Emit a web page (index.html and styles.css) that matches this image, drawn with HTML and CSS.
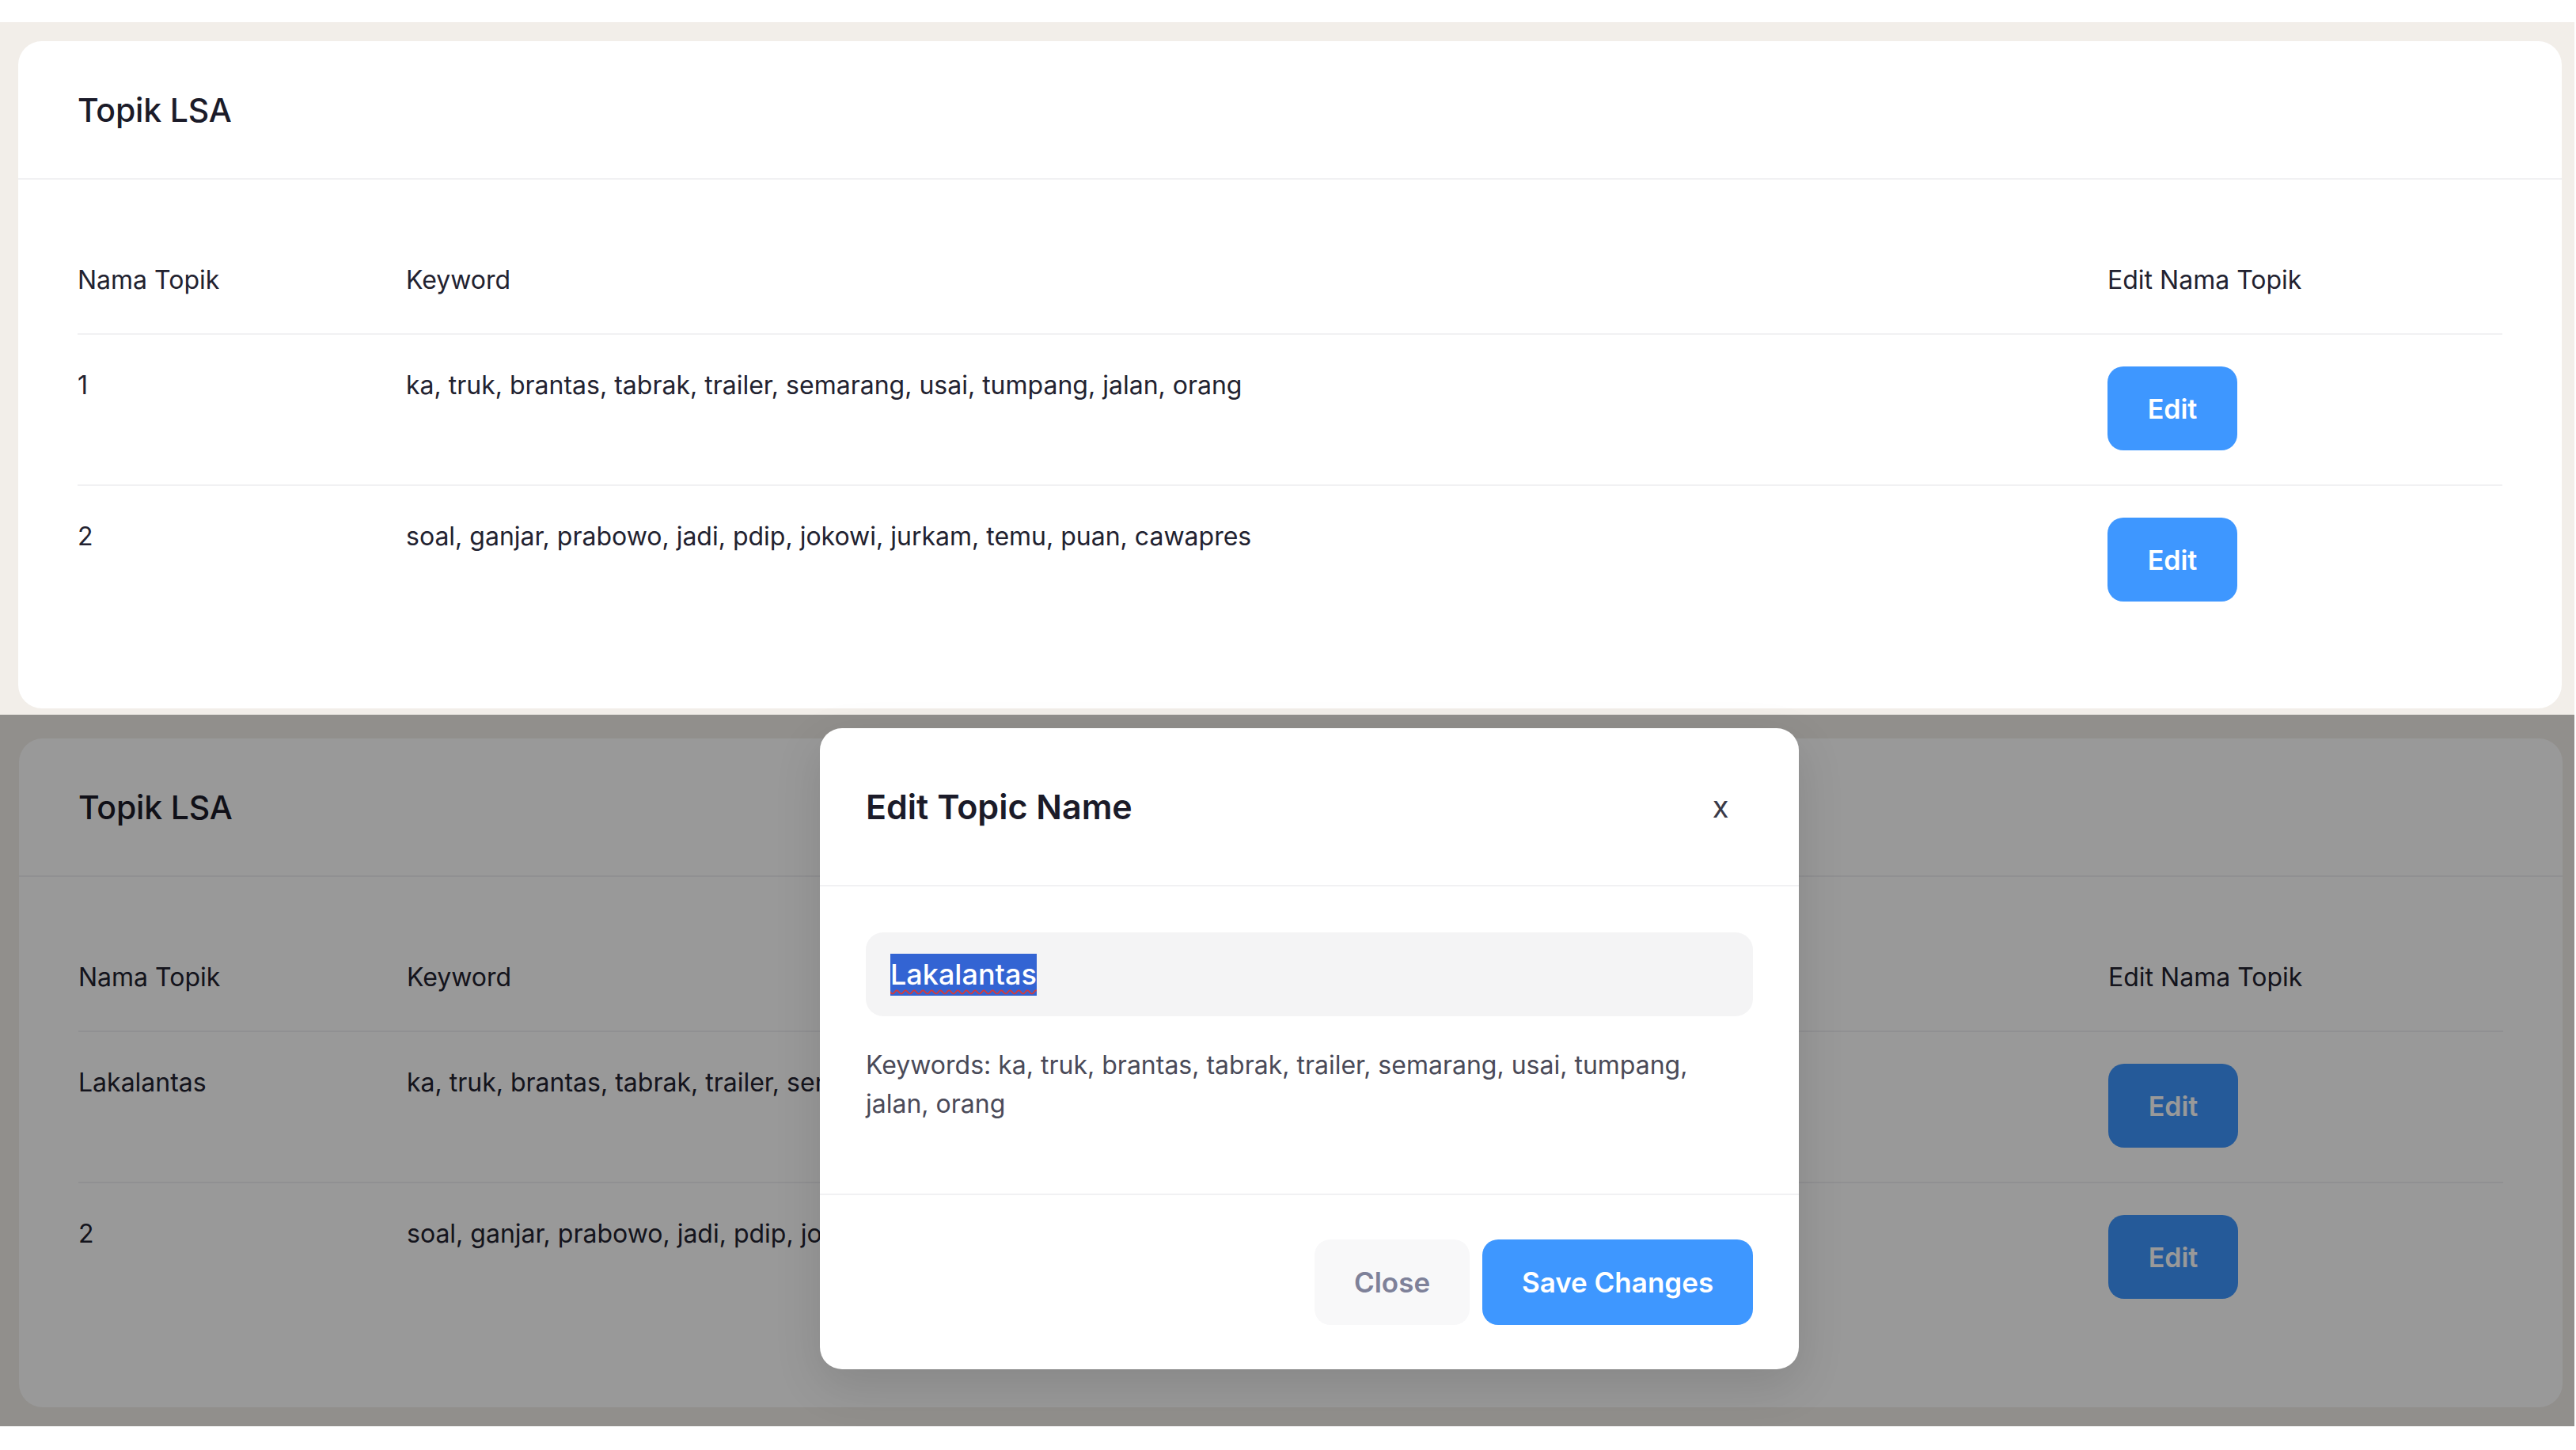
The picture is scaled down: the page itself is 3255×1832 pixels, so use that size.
FILE: index.html
```html
<!DOCTYPE html>
<html lang="id">
<head>
<meta charset="utf-8">
<title>Topik LSA</title>
<link rel="stylesheet" href="styles.css">
</head>
<body>
<div class="top-strip"></div>

<section class="shot shot-one">
  <div class="card">
    <div class="card-header"><h2 class="card-title">Topik LSA</h2></div>
    <div class="card-body">
      <table class="topics">
        <colgroup><col class="c-name"><col class="c-kw"><col class="c-act"></colgroup>
        <thead>
          <tr><th>Nama Topik</th><th>Keyword</th><th>Edit Nama Topik</th></tr>
        </thead>
        <tbody>
          <tr><td>1</td><td>ka, truk, brantas, tabrak, trailer, semarang, usai, tumpang, jalan, orang</td><td><button class="btn-edit">Edit</button></td></tr>
          <tr><td>2</td><td>soal, ganjar, prabowo, jadi, pdip, jokowi, jurkam, temu, puan, cawapres</td><td><button class="btn-edit">Edit</button></td></tr>
        </tbody>
      </table>
    </div>
  </div>
</section>

<section class="shot shot-two">
  <div class="card">
    <div class="card-header"><h2 class="card-title">Topik LSA</h2></div>
    <div class="card-body">
      <table class="topics">
        <colgroup><col class="c-name"><col class="c-kw"><col class="c-act"></colgroup>
        <thead>
          <tr><th>Nama Topik</th><th>Keyword</th><th>Edit Nama Topik</th></tr>
        </thead>
        <tbody>
          <tr><td>Lakalantas</td><td>ka, truk, brantas, tabrak, trailer, semarang, usai, tumpang, jalan, orang</td><td><button class="btn-edit">Edit</button></td></tr>
          <tr><td>2</td><td>soal, ganjar, prabowo, jadi, pdip, jokowi, jurkam, temu, puan, cawapres</td><td><button class="btn-edit">Edit</button></td></tr>
        </tbody>
      </table>
    </div>
  </div>
  <div class="backdrop"></div>
  <div class="modal">
    <div class="modal-header">
      <h3 class="modal-title">Edit Topic Name</h3>
      <button class="modal-close">x</button>
    </div>
    <div class="modal-body">
      <div class="field"><span class="selected">Lakalantas</span></div>
      <p class="kw-note">Keywords: ka, truk, brantas, tabrak, trailer, semarang, usai, tumpang, jalan, orang</p>
    </div>
    <div class="modal-footer">
      <button class="btn-close">Close</button>
      <button class="btn-save">Save Changes</button>
    </div>
  </div>
</section>
</body>
</html>
```

FILE: styles.css
```css
* { box-sizing: border-box; }
html, body { margin: 0; padding: 0; background: #ffffff; }
body {
  font-family: Inter, "Liberation Sans", sans-serif;
  color: #1f1f2e;
  width: 3255px;
}
.top-strip { height: 28px; }

.shot {
  position: relative;
  width: 3253px;
  background: #f2eee9;
  padding-left: 23px;
}
.shot-one { height: 875px; padding-top: 24px; }
.shot-two { height: 899px; padding-top: 30px; padding-left: 24px; }

.card {
  width: 3214px;
  background: #ffffff;
  border-radius: 30px;
}
.shot-one .card { height: 843px; }
.shot-two .card { height: 845px; }

.card-header {
  height: 175px;
  display: flex;
  align-items: center;
  padding: 0 75px;
  border-bottom: 2px solid #f1f1f3;
}
.card-title {
  margin: 0;
  font-size: 41px;
  font-weight: 500;
  color: #1b1b29;
  letter-spacing: -0.2px;
}
.card-body { padding: 59px 75px 0; }

.topics {
  width: 3064px;
  border-collapse: collapse;
  table-layout: fixed;
}
.c-name { width: 415px; }
.c-kw { width: 2150px; }
.c-act { width: 499px; }
.topics th, .topics td {
  text-align: left;
  vertical-align: top;
  font-size: 32px;
  line-height: 47px;
  font-weight: 400;
  color: #222230;
}
.topics th { padding: 44px 0 44px; }
.topics td { padding: 40px 0 43px; }
.topics td:last-child { padding-top: 40px; }
.topics thead tr { border-bottom: 2px solid #f1f1f3; }
.topics tbody tr:first-child { border-bottom: 2px solid #f1f1f3; }

.btn-edit {
  display: block;
  width: 164px;
  height: 106px;
  border: 0;
  border-radius: 20px;
  background: #3e97ff;
  color: #ffffff;
  font-family: Inter, "Liberation Sans", sans-serif;
  font-size: 34px;
  font-weight: 600;
  padding: 0;
}

.backdrop {
  position: absolute;
  inset: 0;
  background: rgba(0, 0, 0, 0.4);
}

.modal {
  position: absolute;
  left: 1036px;
  top: 17px;
  width: 1237px;
  height: 810px;
  background: #ffffff;
  border-radius: 28px;
  box-shadow: 0 20px 60px rgba(0, 0, 0, 0.12);
  display: flex;
  flex-direction: column;
}
.modal-header {
  height: 200px;
  display: flex;
  align-items: center;
  justify-content: space-between;
  padding: 0 58px;
  border-bottom: 2px solid #f1f1f3;
}
.modal-title {
  margin: 0;
  font-size: 43px;
  font-weight: 600;
  color: #1b1b29;
}
.modal-close {
  width: 82px;
  border: 0;
  background: transparent;
  font-family: Inter, "Liberation Sans", sans-serif;
  font-size: 38px;
  line-height: 1;
  font-weight: 400;
  color: #3a3a48;
  padding: 0;
}
.modal-body {
  height: 390px;
  padding: 58px 58px 0;
  border-bottom: 2px solid #f1f1f3;
}
.field {
  height: 106px;
  border-radius: 22px;
  background: #f4f4f5;
  display: flex;
  align-items: center;
  padding-left: 31px;
}
.selected {
  display: inline-block;
  background: #3364d3;
  color: #ffffff;
  font-size: 36px;
  line-height: 53px;
  font-weight: 500;
  text-decoration: underline wavy #d43a3a;
  text-decoration-thickness: 2px;
  text-underline-offset: 6px;
}
.kw-note {
  margin: 37px 0 0;
  font-size: 32px;
  line-height: 49px;
  color: #4a4a58;
}
.modal-footer {
  flex: 1;
  display: flex;
  justify-content: flex-end;
  align-items: center;
  gap: 16px;
  padding: 0 58px;
}
.btn-close, .btn-save {
  height: 108px;
  border: 0;
  border-radius: 20px;
  font-family: Inter, "Liberation Sans", sans-serif;
  font-size: 35px;
  font-weight: 600;
  padding: 0;
}
.btn-close { width: 196px; background: #f8f8f9; color: #7e8199; }
.btn-save { width: 342px; background: #3e97ff; color: #ffffff; }
```
